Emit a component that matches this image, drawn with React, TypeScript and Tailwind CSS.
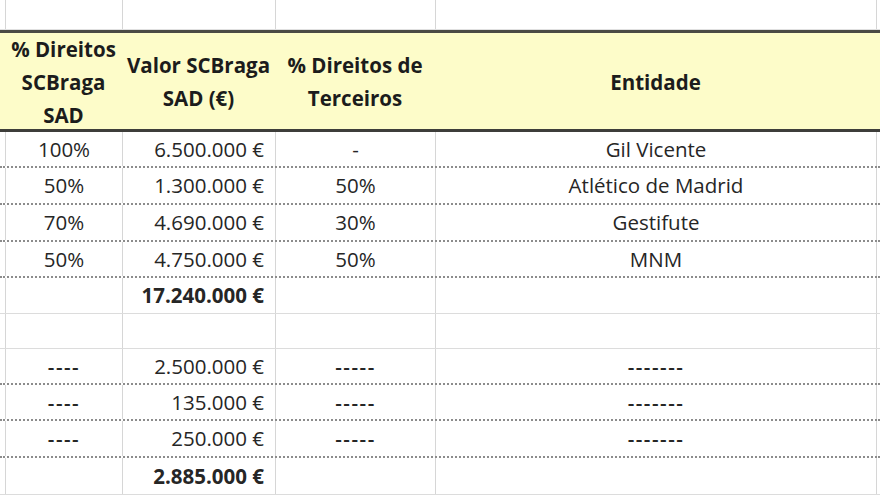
import React from "react";

const grid = "border-l border-[#d6d6d6]";

type Row = {
  a: string;
  b: string;
  c: string;
  d: string;
  h: string;
  dotted: boolean;
  bold?: boolean;
};

const rows: Row[] = [
  { a: "100%", b: "6.500.000 €", c: "-", d: "Gil Vicente", h: "h-[36px]", dotted: true },
  { a: "50%", b: "1.300.000 €", c: "50%", d: "Atlético de Madrid", h: "h-[37px]", dotted: true },
  { a: "70%", b: "4.690.000 €", c: "30%", d: "Gestifute", h: "h-[37px]", dotted: true },
  { a: "50%", b: "4.750.000 €", c: "50%", d: "MNM", h: "h-[36px]", dotted: true },
  { a: "", b: "17.240.000 €", c: "", d: "", h: "h-[36px]", dotted: false, bold: true },
  { a: "", b: "", c: "", d: "", h: "h-[35px]", dotted: false },
  { a: "----", b: "2.500.000 €", c: "-----", d: "-------", h: "h-[36px]", dotted: true },
  { a: "----", b: "135.000 €", c: "-----", d: "-------", h: "h-[36px]", dotted: true },
  { a: "----", b: "250.000 €", c: "-----", d: "-------", h: "h-[37px]", dotted: true },
  { a: "", b: "2.885.000 €", c: "", d: "", h: "h-[37px]", dotted: false, bold: true },
];

function Txt({ v }: { v?: string }) {
  if (!v) return null;
  if (/^-{2,}$/.test(v)) return <span className="tracking-[1.5px] font-semibold">{v}</span>;
  return <span>{v}</span>;
}

function Cells({ r }: { r?: Row }) {
  return (
    <>
      <div className="w-[5px] h-full" />
      <div className={`${grid} w-[117px] h-full flex items-center justify-center`}>
        <Txt v={r?.a} />
      </div>
      <div
        className={`${grid} w-[153px] h-full flex items-center justify-end pr-[11px] ${r?.bold ? "font-bold" : ""}`}
      >
        {r?.b}
      </div>
      <div className={`${grid} w-[160px] h-full flex items-center justify-center`}>
        <Txt v={r?.c} />
      </div>
      <div className={`${grid} w-[441px] h-full flex items-center justify-center`}>
        <Txt v={r?.d} />
      </div>
      <div className={`${grid} flex-1 h-full`} />
    </>
  );
}

export default function App() {
  return (
    <div
      className="w-[880px] h-[495px] overflow-hidden bg-white text-[#262626] text-[20.5px]"
      style={{ fontFamily: '"Open Sans", "Noto Sans", sans-serif' }}
    >
      {/* top empty row */}
      <div className="flex h-[30px] border-b border-[#e0e0e0]">
        <Cells />
      </div>
      {/* header */}
      <div className="h-[102px] bg-[#fdfcc9] border-y-[3px] border-t-[#4a4a44] border-b-[#3e3e3a] flex font-bold text-[#1c1c1c] leading-[33px] text-center">
        <div className="w-[5px]" />
        <div className="w-[117px] flex items-center justify-center pt-[2px]">
          <div>
            % Direitos
            <br />
            SCBraga
            <br />
            SAD
          </div>
        </div>
        <div className="w-[153px] flex items-center justify-center pt-[2px]">
          <div>
            Valor SCBraga
            <br />
            SAD (€)
          </div>
        </div>
        <div className="w-[160px] flex items-center justify-center pt-[2px]">
          <div>
            % Direitos de
            <br />
            Terceiros
          </div>
        </div>
        <div className="w-[441px] flex items-center justify-center pt-[2px]">Entidade</div>
        <div className="flex-1" />
      </div>
      {rows.map((r, i) => (
        <div
          key={i}
          className={`flex ${r.h} ${
            r.dotted ? "border-b-2 border-dotted border-[#8c8c8c]" : "border-b border-[#dcdcdc]"
          }`}
        >
          <Cells r={r} />
        </div>
      ))}
    </div>
  );
}
